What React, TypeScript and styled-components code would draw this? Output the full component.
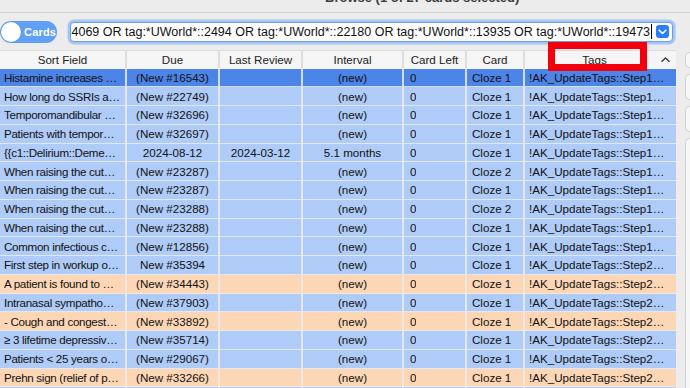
import React from "react";
import styled, { createGlobalStyle } from "styled-components";

const GlobalStyle = createGlobalStyle`
  html, body { margin: 0; padding: 0; background: #ececec; }
  body { font-family: "Liberation Sans", Arial, Helvetica, sans-serif; }
  * { box-sizing: border-box; }
`;

const COLS = "127px 93px 83px 101px 63px 58px 151px";

const Window = styled.div`
  position: relative;
  width: 690px;
  height: 388px;
  overflow: hidden;
  display: flex;
  flex-direction: column;
  background: #ececec;
`;

const TitleBar = styled.div`
  flex: none;
  height: 13px;
  border-bottom: 1px solid #d3d3d3;
  overflow: hidden;
  padding-left: 325px;
`;

const Title = styled.div`
  margin-top: -9px;
  font-size: 13px;
  line-height: 13px;
  font-weight: bold;
  color: #3b3b3b;
  white-space: nowrap;
`;

const Toolbar = styled.div`
  flex: none;
  height: 37px;
  display: flex;
  align-items: center;
`;

const Toggle = styled.div`
  width: 57px;
  height: 22px;
  border-radius: 11px;
  background: #5f9ff6;
  display: flex;
  align-items: center;
  padding-left: 1px;
  gap: 3px;
`;

const Knob = styled.div`
  width: 20px;
  height: 20px;
  border-radius: 50%;
  background: #ffffff;
  box-shadow: 0 0 1px rgba(0, 0, 0, 0.25);
`;

const ToggleLabel = styled.span`
  color: #ffffff;
  font-size: 11px;
  font-weight: bold;
  letter-spacing: 0.2px;
`;

const Search = styled.div`
  margin-left: 12.5px;
  width: 603px;
  height: 20px;
  border-radius: 4px;
  background: #ffffff;
  border: 1px solid #6d9fe8;
  box-shadow: 0 0 0 2.5px #a5c5f3;
  display: flex;
  align-items: center;
  padding-left: 1px;
  overflow: hidden;
`;

const SearchText = styled.span`
  font-size: 12.5px;
  color: #111;
  white-space: nowrap;
`;

const Caret = styled.span`
  display: inline-block;
  flex: none;
  width: 1px;
  height: 15px;
  background: #000;
  margin-left: 1px;
`;

const DropButton = styled.div`
  flex: none;
  margin-left: auto;
  margin-right: 3px;
  width: 13px;
  height: 13px;
  border-radius: 3px;
  background: #2b7ff6;
  display: flex;
  align-items: center;
  justify-content: center;
`;

const Body = styled.div`
  flex: 1;
  display: flex;
  min-height: 0;
`;

const Table = styled.div`
  width: 676px;
  flex: none;
  display: flex;
  flex-direction: column;
  overflow: hidden;
  background: #ffffff;
`;

const HeaderRow = styled.div`
  flex: none;
  display: grid;
  grid-template-columns: ${COLS};
  height: 18.5px;
  background: #f5f5f5;
  border-top: 1px solid #dcdcdc;
`;

const HeaderCell = styled.div<{ $padRight?: number }>`
  position: relative;
  display: flex;
  align-items: center;
  justify-content: center;
  font-size: 11.6px;
  color: #222;
  border-right: 2px solid #dedede;
  padding-right: ${(p) => p.$padRight ?? 0}px;
  white-space: nowrap;
  &:last-child { border-right: none; }
`;

const SortMark = styled.svg`
  position: absolute;
  right: 6px;
  top: 6px;
`;

type Tone = "sel" | "blue" | "orange";

const toneBg: Record<Tone, string> = {
  sel: "#4d84e7",
  blue: "#afcbf8",
  orange: "#fdd6b5",
};

const Row = styled.div<{ $tone: Tone }>`
  display: grid;
  grid-template-columns: ${COLS};
  height: 18.75px;
  flex: none;
  background: ${(p) => toneBg[p.$tone]};
`;

const Cell = styled.div<{ $center?: boolean; $pad?: number; $tight?: boolean }>`
  display: flex;
  align-items: center;
  justify-content: ${(p) => (p.$center ? "center" : "flex-start")};
  padding-left: ${(p) => (p.$center ? 0 : p.$pad ?? 5)}px;
  border-right: 2px solid rgba(236, 236, 236, 0.85);
  border-bottom: 1px solid rgba(236, 236, 236, 0.85);
  font-size: 11.6px;
  letter-spacing: ${(p) => (p.$tight ? "-0.3px" : "0")};
  color: #111;
  white-space: nowrap;
  overflow: hidden;
  &:last-child { border-right: none; }
`;

const CellText = styled.span`
  overflow: hidden;
  text-overflow: ellipsis;
  white-space: nowrap;
`;

const RightStrip = styled.div`
  flex: 1;
  display: flex;
  flex-direction: column;
  gap: 6px;
  padding: 2px 0 0 9px;
`;

const SideBox = styled.div<{ $h: number }>`
  height: ${(p) => p.$h}px;
  flex: none;
  border: 1px solid #d2d2d2;
  border-right: none;
  border-radius: 5px 0 0 5px;
  background: #f7f7f7;
`;

const Annotation = styled.div`
  position: absolute;
  left: 548px;
  top: 42px;
  width: 99px;
  height: 29px;
  border: 7px solid #f2000c;
  pointer-events: none;
`;

type RowData = {
  tone: Tone;
  sort: string;
  due: string;
  last: string;
  interval: string;
  card: string;
  tags: string;
};

const S1 = "!AK_UpdateTags::Step1…";
const S2 = "!AK_UpdateTags::Step2…";

const rows: RowData[] = [
  { tone: "sel", sort: "Histamine increases …", due: "(New #16543)", last: "", interval: "(new)", card: "Cloze 1", tags: S1 },
  { tone: "blue", sort: "How long do SSRIs a…", due: "(New #22749)", last: "", interval: "(new)", card: "Cloze 1", tags: S1 },
  { tone: "blue", sort: "Temporomandibular …", due: "(New #32696)", last: "", interval: "(new)", card: "Cloze 1", tags: S1 },
  { tone: "blue", sort: "Patients with tempor…", due: "(New #32697)", last: "", interval: "(new)", card: "Cloze 1", tags: S1 },
  { tone: "blue", sort: "{{c1::Delirium::Deme…", due: "2024-08-12", last: "2024-03-12", interval: "5.1 months", card: "Cloze 1", tags: S1 },
  { tone: "blue", sort: "When raising the cut…", due: "(New #23287)", last: "", interval: "(new)", card: "Cloze 2", tags: S1 },
  { tone: "blue", sort: "When raising the cut…", due: "(New #23287)", last: "", interval: "(new)", card: "Cloze 1", tags: S1 },
  { tone: "blue", sort: "When raising the cut…", due: "(New #23288)", last: "", interval: "(new)", card: "Cloze 2", tags: S1 },
  { tone: "blue", sort: "When raising the cut…", due: "(New #23288)", last: "", interval: "(new)", card: "Cloze 1", tags: S1 },
  { tone: "blue", sort: "Common infectious c…", due: "(New #12856)", last: "", interval: "(new)", card: "Cloze 1", tags: S1 },
  { tone: "blue", sort: "First step in workup o…", due: "New #35394", last: "", interval: "(new)", card: "Cloze 1", tags: S2 },
  { tone: "orange", sort: "A patient is found to …", due: "(New #34443)", last: "", interval: "(new)", card: "Cloze 1", tags: S2 },
  { tone: "blue", sort: "Intranasal sympatho…", due: "(New #37903)", last: "", interval: "(new)", card: "Cloze 1", tags: S2 },
  { tone: "orange", sort: "- Cough and congest…", due: "(New #33892)", last: "", interval: "(new)", card: "Cloze 1", tags: S2 },
  { tone: "blue", sort: "≥ 3 lifetime depressiv…", due: "(New #35714)", last: "", interval: "(new)", card: "Cloze 1", tags: S2 },
  { tone: "blue", sort: "Patients < 25 years o…", due: "(New #29067)", last: "", interval: "(new)", card: "Cloze 1", tags: S2 },
  { tone: "orange", sort: "Prehn sign (relief of p…", due: "(New #33266)", last: "", interval: "(new)", card: "Cloze 1", tags: S2 },
  { tone: "blue", sort: "", due: "", last: "", interval: "", card: "", tags: "" },
];

const headers = ["Sort Field", "Due", "Last Review", "Interval", "Card Left", "Card"];

export default function App() {
  return (
    <>
      <GlobalStyle />
      <Window>
        <TitleBar>
          <Title>Browse (1 of 27 cards selected)</Title>
        </TitleBar>
        <Toolbar>
          <Toggle>
            <Knob />
            <ToggleLabel>Cards</ToggleLabel>
          </Toggle>
          <Search>
            <SearchText>
              4069 OR tag:*UWorld*::2494 OR tag:*UWorld*::22180 OR tag:*UWorld*::13935 OR tag:*UWorld*::19473
            </SearchText>
            <Caret />
            <DropButton>
              <svg width="9" height="6" viewBox="0 0 9 6">
                <path d="M1.2 1.2 L4.5 4.5 L7.8 1.2" fill="none" stroke="#fff" strokeWidth="1.6" strokeLinecap="round" strokeLinejoin="round" />
              </svg>
            </DropButton>
          </Search>
        </Toolbar>
        <Body>
          <Table>
            <HeaderRow>
              {headers.map((h) => (
                <HeaderCell key={h}>{h}</HeaderCell>
              ))}
              <HeaderCell $padRight={12}>
                Tags
                <SortMark width="9" height="5" viewBox="0 0 9 5">
                  <path d="M1 4.2 L4.5 1 L8 4.2" fill="none" stroke="#333" strokeWidth="1.4" strokeLinecap="round" strokeLinejoin="round" />
                </SortMark>
              </HeaderCell>
            </HeaderRow>
            {rows.map((r, i) => (
              <Row key={i} $tone={r.tone}>
                <Cell $pad={4} $tight><CellText>{r.sort}</CellText></Cell>
                <Cell $center><CellText>{r.due}</CellText></Cell>
                <Cell $center><CellText>{r.last}</CellText></Cell>
                <Cell $center><CellText>{r.interval}</CellText></Cell>
                <Cell $pad={6}><CellText>{r.sort ? "0" : ""}</CellText></Cell>
                <Cell $pad={5}><CellText>{r.card}</CellText></Cell>
                <Cell $pad={4}><CellText>{r.tags}</CellText></Cell>
              </Row>
            ))}
          </Table>
          <RightStrip>
            <SideBox $h={16} />
            <SideBox $h={26} />
            <SideBox $h={26} />
            <SideBox $h={300} />
          </RightStrip>
        </Body>
        <Annotation />
      </Window>
    </>
  );
}
